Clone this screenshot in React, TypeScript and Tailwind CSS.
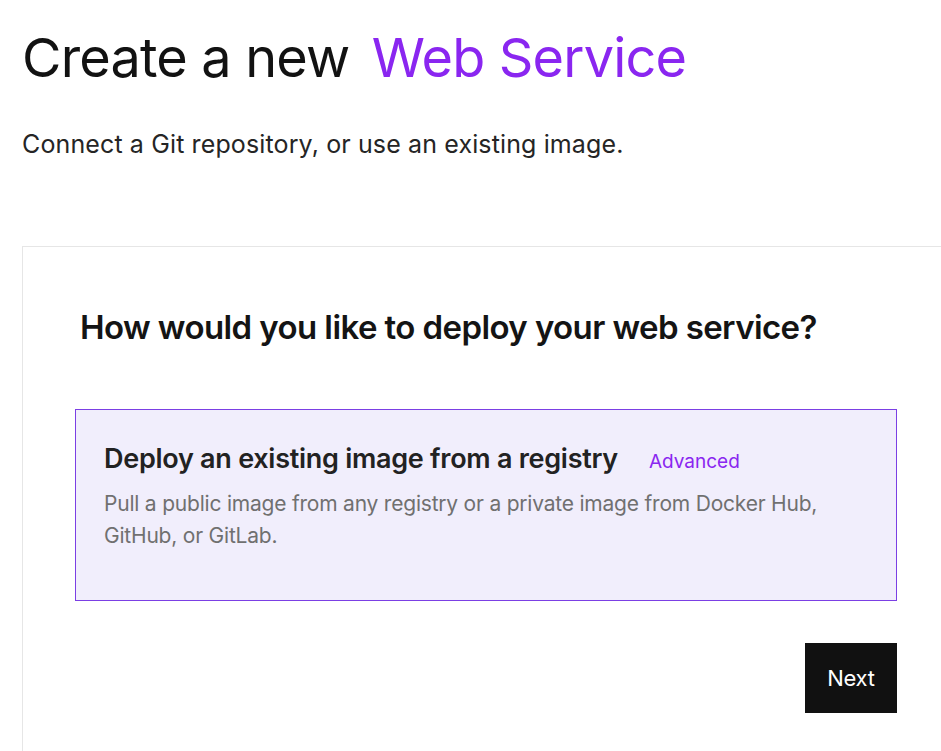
export default function App() {
  return (
    <div className="h-[751px] bg-white pl-[22px] pt-[26px] overflow-hidden" style={{ fontFamily: 'Inter, "Noto Sans", sans-serif' }}>
      <h1 className="text-[54px] leading-[64px] font-normal tracking-[-0.015em] text-[#121212]">
        Create a new <span className="ml-2 text-[#8a26f0]">Web Service</span>
      </h1>
      <p className="mt-[38px] text-[25px] leading-[32px] tracking-[0.005em] text-[#252525]">
        Connect a Git repository, or use an existing image.
      </p>

      <div className="mt-[86px] w-[960px] border border-[#e6e6e6] bg-white pl-[52px] pt-[60px] pb-20">
        <h2 className="pl-[5px] text-[33px] leading-[40px] font-semibold tracking-[-0.018em] text-[#141414]">
          How would you like to deploy your web service?
        </h2>

        <div className="mt-[62px] w-[822px] h-[192px] border border-[#7b3fe4] bg-[#f1eefc] px-7 pt-[32px]">
          <div className="flex items-baseline gap-[31px]">
            <span className="text-[27px] leading-[34px] font-semibold tracking-[-0.01em] text-[#222]">
              Deploy an existing image from a registry
            </span>
            <span className="text-[19px] text-[#8a26f0]">Advanced</span>
          </div>
          <p className="mt-[11px] pr-10 text-[21px] leading-[32px] tracking-[-0.01em] text-[#707070]">
            Pull a public image from any registry or a private image from Docker Hub, GitHub, or GitLab.
          </p>
        </div>

        <div className="mt-[42px] flex w-[822px] justify-end">
          <button className="h-[70px] w-[92px] bg-[#111] text-[22px] tracking-[-0.01em] text-white">Next</button>
        </div>
      </div>
    </div>
  );
}
